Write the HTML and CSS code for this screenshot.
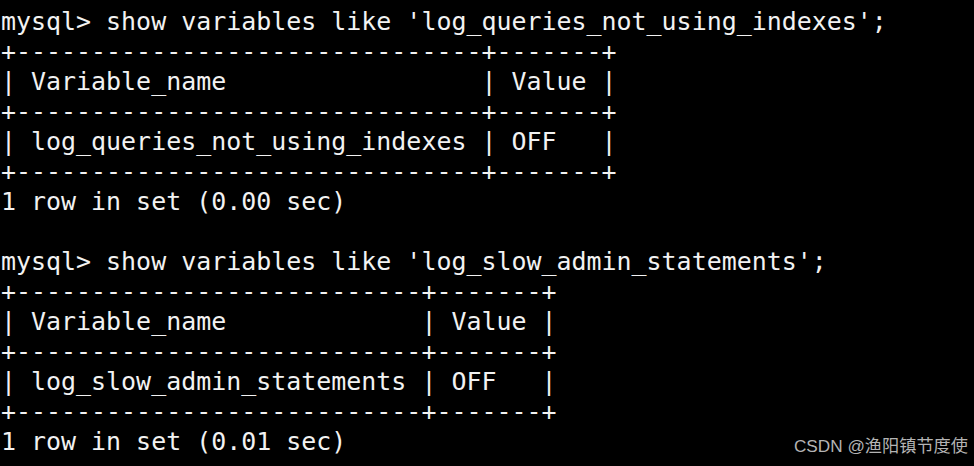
FILE: index.html
```html
<!DOCTYPE html>
<html>
<head>
<meta charset="utf-8">
<link rel="stylesheet" href="styles.css">
</head>
<body>
<div class="term">
<pre class="out">mysql&gt; show variables like 'log_queries_not_using_indexes';
+-------------------------------+-------+
| Variable_name                 | Value |
+-------------------------------+-------+
| log_queries_not_using_indexes | OFF   |
+-------------------------------+-------+
1 row in set (0.00 sec)

mysql&gt; show variables like 'log_slow_admin_statements';
+---------------------------+-------+
| Variable_name             | Value |
+---------------------------+-------+
| log_slow_admin_statements | OFF   |
+---------------------------+-------+
1 row in set (0.01 sec)</pre>
<div class="mark">CSDN @渔阳镇节度使</div>
</div>
</body>
</html>
```
FILE: styles.css
```css
html, body {
  margin: 0;
  padding: 0;
  background: #000;
}
.term {
  position: relative;
  width: 974px;
  height: 466px;
  overflow: hidden;
  background: #000;
}
.out {
  margin: 0;
  padding: 7px 0 0 1px;
  font-family: "DejaVu Sans Mono", monospace;
  font-size: 24.95px;
  line-height: 30px;
  color: #f2f2f2;
  white-space: pre;
}
.mark {
  position: absolute;
  right: 6px;
  bottom: 9px;
  font-family: "Liberation Sans", "Noto Sans CJK SC", sans-serif;
  font-size: 17.2px;
  color: #b4b4b4;
}
```
